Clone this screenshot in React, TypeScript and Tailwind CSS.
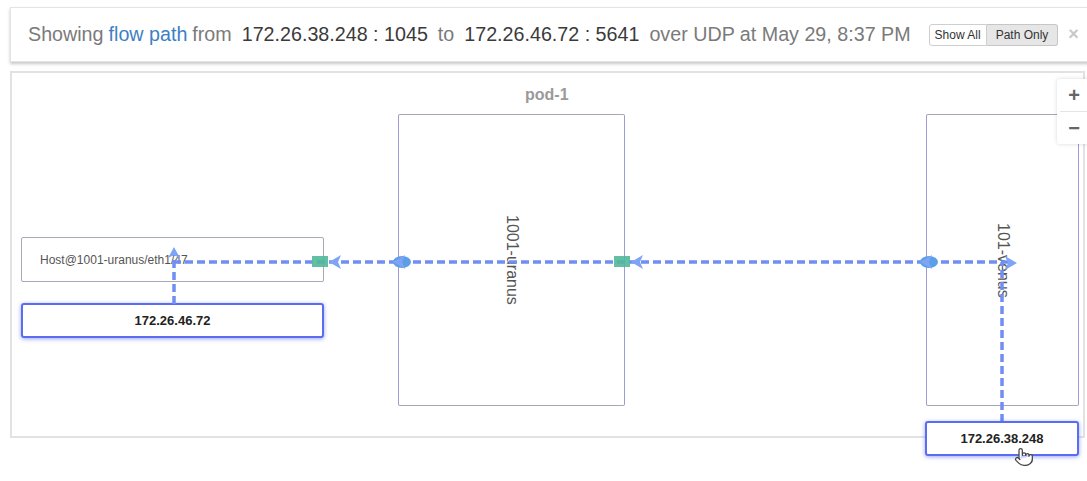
import { Pointer } from 'lucide-react'

const LINE = '#6f8ff2'

function FlowLines() {
  // coordinates are page pixels; the viewBox is shifted to the canvas origin
  return (
    <svg
      className="pointer-events-none absolute left-[-1px] top-[-1px] overflow-visible"
      width={1077}
      height={400}
      viewBox="10 72 1077 400"
    >
      <g stroke={LINE} strokeWidth={3.5} strokeDasharray="8 4" fill="none">
        <line x1={172} y1={262} x2={1001} y2={262} />
        <line x1={173} y1={304} x2={173} y2={252} />
        <line x1={1001} y1={422} x2={1001} y2={262} />
        <line x1={1001} y1={262} x2={1008} y2={262} />
      </g>
      {/* port markers */}
      <rect x={311} y={256} width={16} height={11} fill="#52b89a" opacity={0.9} />
      <rect x={613} y={256} width={16} height={11} fill="#52b89a" opacity={0.9} />
      <ellipse cx={401} cy={262} rx={9} ry={6} fill="#5b9fe6" />
      <ellipse cx={928} cy={262} rx={9} ry={6} fill="#5b9fe6" />
      {/* arrow heads */}
      <g fill="#7fa3f5">
        <polygon points="328,262 340,255 337,262 340,269" />
        <polygon points="630,262 642,255 639,262 642,269" />
        <polygon points="392,262 404,255 401,262 404,269" />
        <polygon points="919,262 931,255 928,262 931,269" />
        <polygon points="173,247 167,258 173,255 179,258" />
        <polygon points="1016,263 1004,256 1007,263 1004,270" />
      </g>
    </svg>
  )
}

function IpBox({ ip, className }: { ip: string; className: string }) {
  return (
    <div
      className={`absolute flex items-center justify-center rounded-[3px] border-2 border-[#5a6cf0] bg-white text-[13px] font-bold text-[#222] shadow-[0_1px_4px_rgba(70,90,240,0.55)] ${className}`}
    >
      {ip}
    </div>
  )
}

export default function App() {
  return (
    <div
      className="relative h-[481px] w-[1087px] overflow-hidden bg-white"
      style={{ fontFamily: '"Liberation Sans", Arial, sans-serif' }}
    >
      {/* header */}
      <div className="ml-[10px] mt-[7px] flex h-[55px] w-[1090px] items-center border border-[#e4e4e4] bg-white pl-[17px] shadow-[0_2px_3px_rgba(0,0,0,0.22)]">
        <div className="flex items-baseline whitespace-nowrap text-[19.7px] text-[#7a7a7a]">
          <span>Showing</span>
          <span className="ml-[5px] text-[#3d7fc4]">flow path</span>
          <span className="ml-[5px]">from</span>
          <span className="ml-[10px] text-[#3a3a3a]">172.26.38.248 : 1045</span>
          <span className="ml-[10px]">to</span>
          <span className="ml-[10px] text-[#3a3a3a]">172.26.46.72 : 5641</span>
          <span className="ml-[10px]">over UDP at May 29, 8:37 PM</span>
        </div>
        <div className="ml-[18px] flex h-[22px] text-[12px] text-[#333]">
          <button className="rounded-l-[3px] border border-[#cfcfcf] bg-white px-[5px]">Show All</button>
          <button className="rounded-r-[3px] border border-l-0 border-[#c6c6c6] bg-[#e6e6e6] px-[9px]">Path Only</button>
        </div>
        <span className="ml-[10px] text-[18px] font-bold text-[#c8c8c8]">×</span>
      </div>

      {/* canvas */}
      <div className="relative ml-[10px] mt-[9px] h-[367px] w-[1075px] border-2 border-[#e2e2e2] bg-white">
        <div className="absolute left-[513px] top-[10px] text-[16px] font-bold text-[#9a9a9a]">pod-1</div>

        <div className="absolute left-[386px] top-[41px] flex h-[292px] w-[227px] items-center justify-center rounded-[2px] border border-l-[#9b9bd6] border-r-[#9b9bd6] border-t-[#a7a7b4] border-b-[#a7a7b4]">
          <span className="text-[16px] text-[#555] [writing-mode:vertical-rl]">1001-uranus</span>
        </div>

        <div className="absolute left-[914px] top-[41px] flex h-[292px] w-[153px] items-center justify-center rounded-[2px] border border-l-[#9b9bd6] border-r-[#9b9bd6] border-t-[#a7a7b4] border-b-[#a7a7b4]">
          <span className="text-[16px] text-[#555] [writing-mode:vertical-rl]">101-venus</span>
        </div>

        <div className="absolute left-[9px] top-[164px] flex h-[45px] w-[303px] items-center rounded-[2px] border border-[#a8a8b8] bg-white pl-[18px] text-[12px] text-[#555]">
          Host@1001-uranus/eth1/47
        </div>

        <IpBox ip="172.26.46.72" className="left-[9px] top-[230px] h-[35px] w-[303px]" />

        <FlowLines />

        <IpBox ip="172.26.38.248" className="left-[913px] top-[348px] h-[35px] w-[154px]" />

        <Pointer
          className="absolute left-[1002px] top-[374px] fill-white text-[#444]"
          size={20}
          strokeWidth={1.5}
        />

        <div className="absolute left-[1045px] top-[6px] flex w-[34px] flex-col rounded-[3px] bg-white text-[#666] shadow-[0_0_4px_rgba(0,0,0,0.15)]">
          <div className="flex h-[32px] items-center justify-center text-[20px] font-bold">+</div>
          <div className="mx-[3px] h-px bg-[#e4e4e4]" />
          <div className="flex h-[32px] items-center justify-center text-[20px] font-bold">−</div>
        </div>
      </div>
    </div>
  )
}
